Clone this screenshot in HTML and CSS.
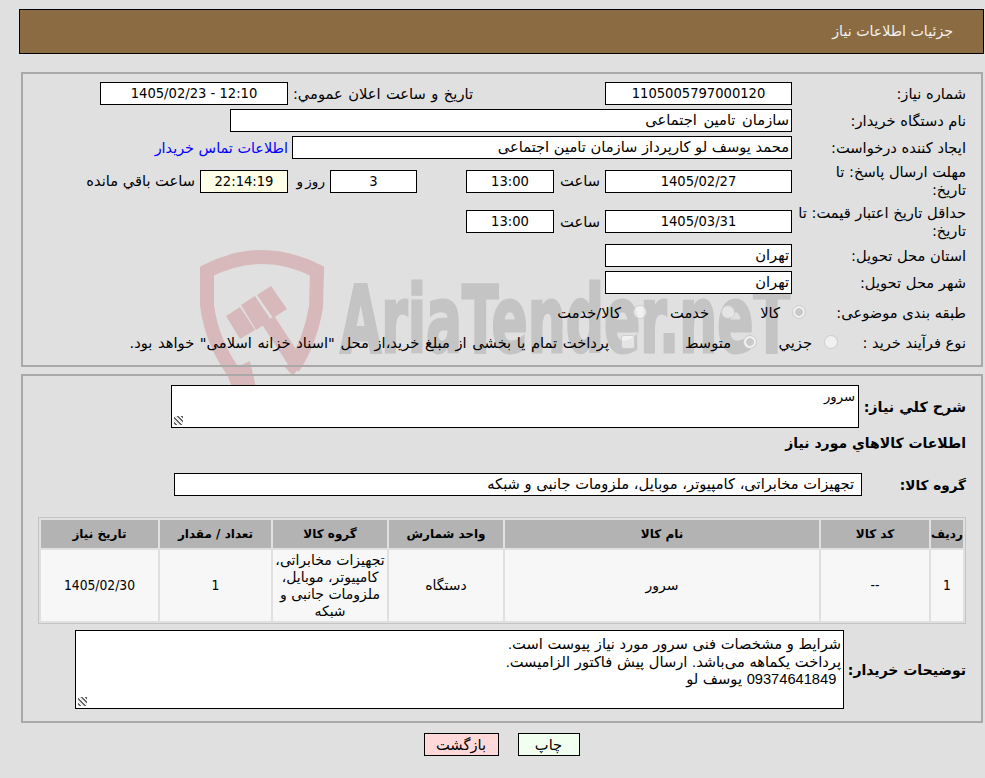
FILE: index.html
```html
<!DOCTYPE html>
<html lang="fa" dir="rtl">
<head>
<meta charset="utf-8">
<title>جزئیات اطلاعات نیاز</title>
<link rel="stylesheet" href="styles.css">
</head>
<body>
<svg class="watermark" width="985" height="778" viewBox="0 0 985 778" aria-hidden="true">
  <g class="wm-shield">
    <path class="wm-stroke" d="M238 378 Q212 345 207 305 L207 271 Q262 243 317 271 L316 307 Q310 342 293 368"/>
    <path class="wm-handle" d="M268 320 L294 360"/>
    <polygon points="226,316 240,307 255,330 240,339"/>
    <polygon points="241,305 255,296 271,320 256,330"/>
    <polygon points="257,295 271,286 287,309 273,318"/>
    <polygon points="226,372 250,361 257,392 234,392"/>
    <polygon points="284,366 300,366 293,376"/>
  </g>
  <text class="wm-text" x="340" y="352" textLength="450" lengthAdjust="spacingAndGlyphs" direction="ltr">AriaTender.neT</text>
</svg>

<header class="title-bar">جزئیات اطلاعات نیاز</header>

<section class="panel panel-info">
  <div class="row row-23">
    <div class="label">شماره نیاز:</div>
    <div class="box num w187">1105005797000120</div>
    <div class="label-inline gap-132 lw180">تاریخ و ساعت اعلان عمومي:</div>
    <div class="box num w188">12:10 - 1405/02/23</div>
  </div>
  <div class="row row-23">
    <div class="label">نام دستگاه خریدار:</div>
    <div class="box box-text wide-words w562">سازمان تامین اجتماعی</div>
  </div>
  <div class="row row-23">
    <div class="label">ایجاد کننده درخواست:</div>
    <div class="box box-text w500">محمد یوسف لو کارپرداز سازمان تامین اجتماعی</div>
    <a class="link" href="#">اطلاعات تماس خریدار</a>
  </div>
  <div class="row row-36">
    <div class="label">مهلت ارسال پاسخ: تا تاریخ:</div>
    <div class="box num w187">1405/02/27</div>
    <div class="label-inline lw41">ساعت</div>
    <div class="box num w88">13:00</div>
    <div class="box num w87 gap-49">3</div>
    <div class="label-inline lw28 days">روز و</div>
    <div class="box num timer w88 gap-9">22:14:19</div>
    <div class="label-inline">ساعت باقي مانده</div>
  </div>
  <div class="row row-37">
    <div class="label">حداقل تاریخ اعتبار قیمت: تا تاریخ:</div>
    <div class="box num w187">1405/03/31</div>
    <div class="label-inline lw41">ساعت</div>
    <div class="box num w88">13:00</div>
  </div>
  <div class="row row-23">
    <div class="label">استان محل تحویل:</div>
    <div class="box box-text w187">تهران</div>
  </div>
  <div class="row row-23">
    <div class="label">شهر محل تحویل:</div>
    <div class="box box-text w187">تهران</div>
  </div>
  <div class="row row-30">
    <div class="label label-160">طبقه بندی موضوعی:</div>
    <label class="opt w71"><input type="radio" name="cat" checked disabled><span>کالا</span></label>
    <label class="opt w88"><input type="radio" name="cat" disabled><span>خدمت</span></label>
    <label class="opt"><input type="radio" name="cat" disabled><span>کالا/خدمت</span></label>
  </div>
  <div class="row row-22">
    <div class="label label-128">نوع فرآیند خرید :</div>
    <label class="opt w81"><input type="radio" name="proc" disabled><span>جزیي</span></label>
    <label class="opt w122"><input type="radio" name="proc" checked disabled><span>متوسط</span></label>
    <label class="opt"><input type="checkbox" disabled><span class="treasury">پرداخت تمام یا بخشی از مبلغ خرید،از محل "اسناد خزانه اسلامی" خواهد بود.</span></label>
  </div>
</section>

<section class="panel panel-goods">
  <div class="row desc-row">
    <div class="label-bold label-102">شرح کلي نیاز:</div>
    <textarea class="area area-desc" readonly>سرور</textarea>
  </div>
  <h2 class="section-title">اطلاعات کالاهاي مورد نیاز</h2>
  <div class="row group-row">
    <div class="label-bold label-99">گروه کالا:</div>
    <div class="box box-group">تجهیزات مخابراتی، کامپیوتر، موبایل، ملزومات جانبی و شبکه</div>
  </div>
  <table class="goods">
    <colgroup>
      <col class="c32"><col class="c108"><col class="c314"><col class="c114"><col class="c114"><col class="c111"><col class="c117">
    </colgroup>
    <thead>
      <tr><th>ردیف</th><th>کد کالا</th><th>نام کالا</th><th>واحد شمارش</th><th>گروه کالا</th><th>تعداد / مقدار</th><th>تاریخ نیاز</th></tr>
    </thead>
    <tbody>
      <tr><td class="num">1</td><td class="num">--</td><td>سرور</td><td>دستگاه</td><td>تجهیزات مخابراتی، کامپیوتر، موبایل، ملزومات جانبی و شبکه</td><td class="num">1</td><td class="num">1405/02/30</td></tr>
    </tbody>
  </table>
  <div class="row notes-row">
    <div class="label-bold label-117">توضیحات خریدار:</div>
    <textarea class="area area-notes" readonly>شرایط و مشخصات فنی سرور مورد نیاز پیوست است.
پرداخت یکماهه می‌باشد. ارسال پیش فاکتور الزامیست.
 09374641849 یوسف لو</textarea>
  </div>
</section>

<div class="actions">
  <button class="btn btn-print" type="button">چاپ</button>
  <button class="btn btn-back" type="button">بازگشت</button>
</div>
</body>
</html>
```

FILE: styles.css
```css
* { box-sizing: border-box; }
html, body { margin: 0; height: 778px; overflow: hidden; }
body {
  background: #e0e0e0;
  color: #000;
  font-family: "DejaVu Sans", sans-serif;
  font-size: 14.67px;
  line-height: 18px;
  padding-top: 9px;
  position: relative;
}
.num { font-family: "DejaVu Sans Condensed", "DejaVu Sans", sans-serif; font-size: 14.6px; }
.watermark { position: absolute; left: 0; top: 0; z-index: 0; pointer-events: none; }
.wm-shield polygon { fill: #d8b9bb; }
.wm-stroke { fill: none; stroke: #d8b9bb; stroke-width: 14; }
.wm-handle { fill: none; stroke: #d8b9bb; stroke-width: 15; }
.wm-text {
  fill: #c4c4c4;
  stroke: #c4c4c4;
  stroke-width: 3;
  font-family: "DejaVu Sans", sans-serif;
  font-weight: bold;
  font-size: 92px;
}
.title-bar, .panel, .actions { position: relative; z-index: 1; }
.title-bar {
  height: 45px;
  margin: 0 1px 0 19px;
  background: #8b6c42;
  border: 1px solid #000;
  color: #f2f2f2;
  font-size: 14.2px;
  padding: 0 30px;
  line-height: 42px;
}
.panel {
  margin: 0 2px 0 21px;
  border: 2px solid #a9a9a9;
  padding-right: 15px;
}
.panel-info {
  margin-top: 18px;
  height: 295px;
  padding-top: 8px;
  display: flex;
  flex-direction: column;
  gap: 4px;
}
.panel-goods { margin-top: 7px; height: 349px; padding-top: 9px; }
.row { display: flex; align-items: center; gap: 5px; }
.row-22 { height: 22px; }
.row-23 { height: 23px; }
.row-30 { height: 30px; }
.row-36 { height: 36px; }
.row-37 { height: 37px; }
.label { flex: none; width: 174px; padding-left: 6px; margin-left: -5px; }
.label-160 { width: 160px; padding-left: 0; margin-left: -5px; }
.label-128 { width: 128px; padding-left: 0; margin-left: -5px; }
.label-inline { flex: none; white-space: nowrap; }
.lw28 { width: 28px; }
.lw41 { width: 41px; }
.lw180 { width: 180px; word-spacing: .8px; }
.days { font-size: 13.6px; word-spacing: -2px; }
.wide-words { word-spacing: 2px; letter-spacing: .1px; }
.gap-132 { margin-right: 127px; }
.gap-49 { margin-right: 44px; }
.gap-9 { margin-right: 4px; }
.box {
  flex: none;
  height: 23px;
  background: #fff;
  border: 1px solid #000;
  text-align: center;
  line-height: 20px;
  white-space: nowrap;
  overflow: hidden;
}
.box-text { text-align: right; padding: 0 2px; }
.w87 { width: 87px; }
.w88 { width: 88px; }
.w187 { width: 187px; }
.w188 { width: 188px; }
.w500 { width: 500px; }
.w562 { width: 562px; }
.timer { background: #ffffe8; }
.link { color: #0000ff; font-size: 14.4px; text-decoration: none; white-space: nowrap; margin-right: -1px; }
.opt { display: flex; align-items: center; gap: 12px; flex: none; white-space: nowrap; }
.treasury { word-spacing: 1px; }
.row:has(.opt) { gap: 0; }
.row:has(.opt) .label { margin-left: 0; }
.w71 { width: 71px; }
.w81 { width: 81px; }
.w88.opt { width: 88px; }
.w122 { width: 122px; }
.opt input {
  appearance: none;
  flex: none;
  width: 14px;
  height: 14px;
  margin: 0 0 3px;
  background: rgba(255, 255, 255, .55);
  border: 1px solid rgba(185, 185, 185, .6);
  border-radius: 50%;
}
.opt input[type="checkbox"] { border-radius: 3px; }
.opt input:checked { background: radial-gradient(circle, #c9c9c9 0 3.5px, #f0f0f0 4.2px); }
.label-bold { flex: none; font-weight: bold; font-size: 14px; white-space: nowrap; }
.label-99 { width: 99px; font-size: 13.6px; }
.label-102 { width: 102px; font-size: 14.3px; }
.label-117 { width: 117px; }
.area {
  display: block;
  flex: none;
  background: #fff;
  border: 1px solid #000;
  border-radius: 0;
  color: #000;
  font-family: inherit;
  margin: 0;
  outline: none;
  padding: 2px;
  overflow: hidden;
}
.area::-webkit-resizer {
  background: repeating-linear-gradient(45deg, #e8e8e8 0 1px, #666 1px 2.4px, #fff 2.4px 3.4px) left 2px bottom 2px / 9px 9px no-repeat;
}
.desc-row { height: 43px; }
.area-desc { width: 688px; height: 43px; font-size: 13.2px; line-height: 15px; padding: 3px 3px; }
.section-title {
  margin: 6px 0 0;
  font-size: 14px;
  font-weight: bold;
  line-height: 18px;
}
.group-row { margin-top: 21px; height: 23px; }
.box-group { width: 688px; text-align: right; padding: 0 7px; }
.goods {
  margin: 21px 0 0;
  width: 928px;
  table-layout: fixed;
  border-collapse: separate;
  border-spacing: 2px;
  border: 1px solid #c4c4c4;
  font-size: 14px;
  line-height: 17px;
}
.c32 { width: 32px; }
.c108 { width: 108px; }
.c314 { width: 314px; }
.c114 { width: 114px; }
.c111 { width: 111px; }
.c117 { width: 117px; }
.goods th { height: 28px; padding: 0; background: #b3b3b3; font-weight: bold; font-size: 12px; }
.goods td { height: 71px; padding: 0; background: #f7f7f7; text-align: center; }
.goods td.num { font-size: 13.7px; }
.notes-row { margin-top: 6px; height: 79px; }
.area-notes {
  width: 769px;
  height: 79px;
  font-family: "Liberation Sans", "DejaVu Sans", sans-serif;
  font-size: 14.67px;
  word-spacing: .6px;
  line-height: 17.6px;
  padding: 5px 2px;
}
.actions { display: flex; justify-content: center; gap: 19px; margin: 10px 0 0; padding-left: 18px; direction: ltr; flex-direction: row-reverse; }
.btn {
  height: 23px;
  border: 1px solid #000;
  border-radius: 0;
  padding: 0;
  color: #000;
  font-family: inherit;
  font-size: 14.67px;
  line-height: 18px;
}
.btn-print { width: 62px; background: #f0fff0; }
.btn-back { width: 75px; background: #ffd9d9; }
```
